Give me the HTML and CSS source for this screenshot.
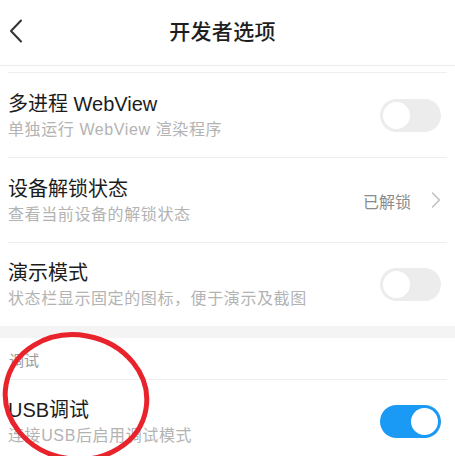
FILE: index.html
```html
<!DOCTYPE html>
<html lang="zh-CN">
<head>
<meta charset="utf-8">
<title>开发者选项</title>
<link rel="stylesheet" href="styles.css">
</head>
<body>
<div class="screen">
  <header class="topbar">
    <svg class="back" width="14" height="24" viewBox="0 0 14 24"><path d="M12 1.5 L2 12 L12 22.5" fill="none" stroke="#333" stroke-width="2" stroke-linecap="round" stroke-linejoin="round"/></svg>
    <h1 class="title">开发者选项</h1>
  </header>
  <div class="gap"></div>
  <ul class="list">
    <li class="row">
      <div class="texts">
        <div class="row-title">多进程 WebView</div>
        <div class="row-sub">单独运行 WebView 渲染程序</div>
      </div>
      <span class="toggle"><span class="knob"></span></span>
    </li>
    <li class="row">
      <div class="texts">
        <div class="row-title">设备解锁状态</div>
        <div class="row-sub">查看当前设备的解锁状态</div>
      </div>
      <span class="value">已解锁</span>
      <svg class="chev" width="10" height="16" viewBox="0 0 10 16"><path d="M1.5 1 L8.5 8 L1.5 15" fill="none" stroke="#bdbdbd" stroke-width="1.4" stroke-linecap="round" stroke-linejoin="round"/></svg>
    </li>
    <li class="row last">
      <div class="texts">
        <div class="row-title">演示模式</div>
        <div class="row-sub">状态栏显示固定的图标，便于演示及截图</div>
      </div>
      <span class="toggle"><span class="knob"></span></span>
    </li>
  </ul>
  <div class="band"></div>
  <div class="section">调试</div>
  <ul class="list">
    <li class="row last">
      <div class="texts">
        <div class="row-title">USB调试</div>
        <div class="row-sub">连接USB后启用调试模式</div>
      </div>
      <span class="toggle on"><span class="knob"></span></span>
    </li>
  </ul>
  <svg class="circle" width="170" height="150" viewBox="0 0 170 150"><ellipse cx="77" cy="77" rx="71" ry="62" fill="none" stroke="#e8232b" stroke-width="5" transform="rotate(10 77 77)"/></svg>
</div>
</body>
</html>
```

FILE: styles.css
```css
* { box-sizing: border-box; }
html, body { margin: 0; padding: 0; background: #fff; }
body {
  font-family: "Liberation Sans", "Noto Sans CJK SC", sans-serif;
  width: 455px;
  height: 456px;
  overflow: hidden;
}
.screen { position: relative; width: 455px; height: 456px; overflow: hidden; }
.topbar {
  height: 66px;
  border-bottom: 1px solid #ececec;
  display: flex;
  align-items: center;
  justify-content: center;
  position: relative;
}
.back { position: absolute; left: 9px; top: 19px; }
.title {
  margin: 0 10px 6px 0;
  font-size: 21px;
  font-weight: 500;
  color: #1e1e1e;
  letter-spacing: 0.3px;
}
.gap { height: 6px; }
.list { list-style: none; margin: 0; padding: 0 8px; }
.row {
  height: 85px;
  border-top: 1px solid #eeeeee;
  display: flex;
  align-items: center;
  padding-right: 6px;
}
.row.last { height: 84px; }
.texts { flex: 1; display: flex; flex-direction: column; padding-top: 2px; }
.row-title { font-size: 20px; line-height: 27px; color: #1c1c1c; }
.row-sub { font-size: 16px; line-height: 24px; color: #b3b3b3; letter-spacing: 0.6px; }
.value { font-size: 16px; color: #8a8a8a; margin-right: 20px; margin-top: 2px; }
.toggle {
  width: 61px;
  height: 33px;
  border-radius: 17px;
  background: #ececec;
  position: relative;
  flex: none;
}
.knob {
  position: absolute;
  left: 3px;
  top: 3px;
  width: 27px;
  height: 27px;
  border-radius: 50%;
  background: #fff;
}
.toggle.on { background: #1a9af5; }
.toggle.on .knob { left: 31px; }
.band { height: 12px; background: #f4f4f4; }
.section {
  height: 41px;
  padding-left: 9px;
  display: flex;
  align-items: center;
  font-size: 15px;
  color: #9a9a9a;
  padding-top: 2px;
}
.circle { position: absolute; left: -1px; top: 320px; }
```
